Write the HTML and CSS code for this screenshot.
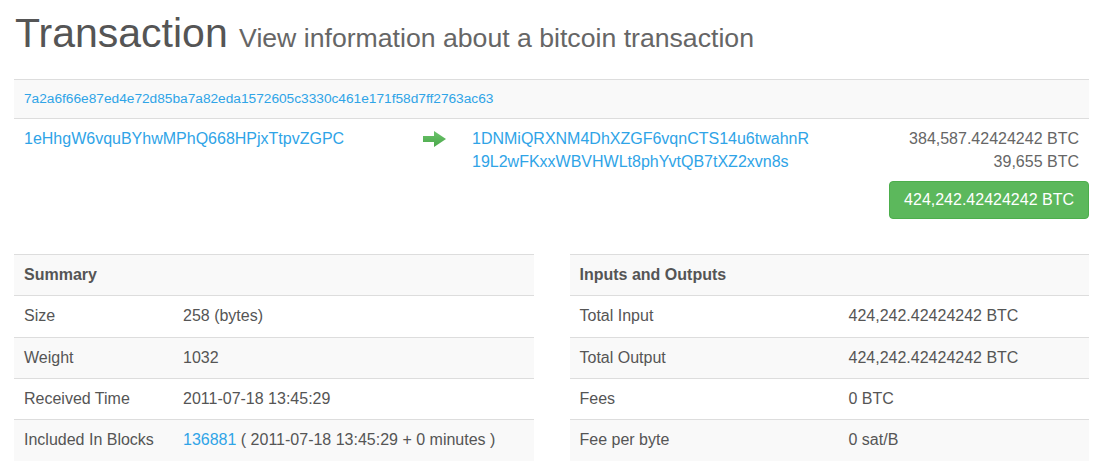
FILE: index.html
```html
<!DOCTYPE html>
<html lang="en">
<head>
<meta charset="utf-8">
<title>Transaction</title>
<link rel="stylesheet" href="styles.css">
</head>
<body>
<div class="page">
  <h1 class="title">Transaction <small>View information about a bitcoin transaction</small></h1>

  <div class="tx">
    <div class="tx-hash"><a href="#">7a2a6f66e87ed4e72d85ba7a82eda1572605c3330c461e171f58d7ff2763ac63</a></div>
    <div class="tx-io">
      <div class="inputs"><a href="#">1eHhgW6vquBYhwMPhQ668HPjxTtpvZGPC</a></div>
      <div class="arrow">
        <svg width="23" height="16" viewBox="0 0 23 16" aria-hidden="true">
          <defs>
            <linearGradient id="ag" x1="0" y1="0" x2="0" y2="1">
              <stop offset="0" stop-color="#6cc36c"/>
              <stop offset="1" stop-color="#4aa84a"/>
            </linearGradient>
          </defs>
          <polygon points="0,5 11,5 11,0 23,8 11,16 11,11 0,11" fill="url(#ag)"/>
        </svg>
      </div>
      <div class="outputs">
        <div class="out-row"><a href="#">1DNMiQRXNM4DhXZGF6vqnCTS14u6twahnR</a><span class="amount">384,587.42424242 BTC</span></div>
        <div class="out-row"><a href="#">19L2wFKxxWBVHWLt8phYvtQB7tXZ2xvn8s</a><span class="amount">39,655 BTC</span></div>
        <div class="total"><span class="btn-total">424,242.42424242 BTC</span></div>
      </div>
    </div>
  </div>

  <div class="tables">
    <table class="info">
      <colgroup><col class="c-sum"><col></colgroup>
      <thead><tr><th colspan="2">Summary</th></tr></thead>
      <tbody>
        <tr><td>Size</td><td>258 (bytes)</td></tr>
        <tr><td>Weight</td><td>1032</td></tr>
        <tr><td>Received Time</td><td>2011-07-18 13:45:29</td></tr>
        <tr><td>Included In Blocks</td><td><a href="#">136881</a> ( 2011-07-18 13:45:29 + 0 minutes )</td></tr>
      </tbody>
    </table>
    <table class="info">
      <colgroup><col class="c-io"><col></colgroup>
      <thead><tr><th colspan="2">Inputs and Outputs</th></tr></thead>
      <tbody>
        <tr><td>Total Input</td><td>424,242.42424242 BTC</td></tr>
        <tr><td>Total Output</td><td>424,242.42424242 BTC</td></tr>
        <tr><td>Fees</td><td>0 BTC</td></tr>
        <tr><td>Fee per byte</td><td>0 sat/B</td></tr>
      </tbody>
    </table>
  </div>
</div>
</body>
</html>
```

FILE: styles.css
```css
* { box-sizing: border-box; }

body {
  margin: 0;
  font-family: "Liberation Sans", Arial, Helvetica, sans-serif;
  font-size: 16px;
  line-height: 1.42857;
  color: #555;
  background: #fff;
}

a {
  color: #2fa4e7;
  text-decoration: none;
}

.page {
  padding: 0 22px 0 14px;
}

.title {
  margin: 11px 0 23px 1px;
  font-size: 41px;
  font-weight: normal;
  line-height: 1.1;
  color: #555;
}

.title small {
  font-size: 65%;
  color: #666;
}

.tx-hash {
  border-top: 1px solid #ddd;
  border-bottom: 1px solid #ddd;
  background: #f9f9f9;
  padding: 9px 10px;
  font-size: 13.7px;
  line-height: 20px;
}

.tx-io {
  display: grid;
  grid-template-columns: 399px 49px 1fr;
  padding: 9px 0;
}

.inputs,
.arrow {
  padding: 0 10px;
}

.arrow svg {
  display: block;
  margin-top: 3px;
}

.outputs {
  padding-left: 10px;
}

.out-row {
  display: flex;
  justify-content: space-between;
  padding-right: 10px;
}

.amount {
  color: #666;
}

.total {
  display: flex;
  justify-content: flex-end;
  margin-top: 7px;
}

.btn-total {
  display: inline-block;
  background: #5cb85c;
  border: 1px solid #4cae4c;
  border-radius: 4px;
  color: #fff;
  padding: 7px 14px;
  line-height: 22px;
}

.tables {
  display: grid;
  grid-template-columns: 1fr 1fr;
  column-gap: 36px;
  align-items: start;
  margin-top: 26px;
}

.info {
  width: 100%;
  border-collapse: collapse;
  table-layout: fixed;
}

.info .c-sum { width: 159px; }
.info .c-io { width: 269px; }

.info th,
.info td {
  padding: 9px 10px;
  line-height: 22.4px;
  border-top: 1px solid #ddd;
  text-align: left;
  vertical-align: top;
  white-space: nowrap;
}

.info th {
  font-weight: bold;
  background: #f9f9f9;
}

.info tbody tr:nth-child(even) td {
  background: #f9f9f9;
}
```
